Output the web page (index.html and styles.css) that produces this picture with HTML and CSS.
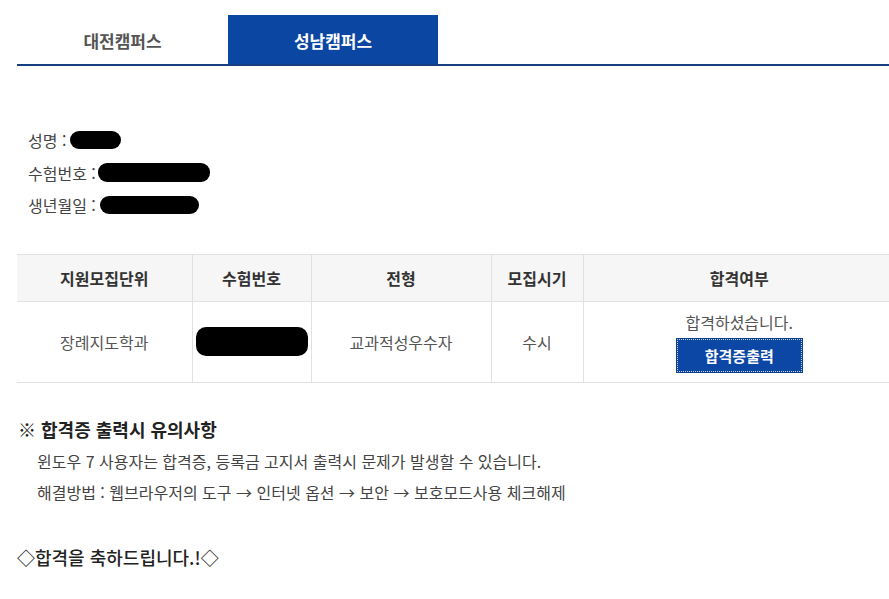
FILE: index.html
```html
<!DOCTYPE html>
<html lang="ko">
<head>
<meta charset="utf-8">
<title>합격자 조회</title>
<link rel="stylesheet" href="styles.css">
</head>
<body>
<div class="page">
  <div class="tabs">
    <a class="tab">대전캠퍼스</a>
    <a class="tab active">성남캠퍼스</a>
  </div>

  <div class="info">
    <div class="info-row">성명 : <span class="redact r-name"></span></div>
    <div class="info-row">수험번호 : <span class="redact r-num"></span></div>
    <div class="info-row">생년월일 : <span class="redact r-birth"></span></div>
  </div>

  <table class="result">
    <colgroup>
      <col class="c1"><col class="c2"><col class="c3"><col class="c4"><col class="c5">
    </colgroup>
    <thead>
      <tr>
        <th>지원모집단위</th>
        <th>수험번호</th>
        <th>전형</th>
        <th>모집시기</th>
        <th>합격여부</th>
      </tr>
    </thead>
    <tbody>
      <tr>
        <td>장례지도학과</td>
        <td><span class="redact r-cell"></span></td>
        <td>교과적성우수자</td>
        <td>수시</td>
        <td>
          <div class="pass">합격하셨습니다.</div>
          <button class="print-btn">합격증출력</button>
        </td>
      </tr>
    </tbody>
  </table>

  <div class="notice">
    <h3 class="notice-title">※ 합격증 출력시 유의사항</h3>
    <p class="notice-line">윈도우 7 사용자는 합격증, 등록금 고지서 출력시 문제가 발생할 수 있습니다.</p>
    <p class="notice-line">해결방법 : 웹브라우저의 도구 → 인터넷 옵션 → 보안 → 보호모드사용 체크해제</p>
  </div>

  <p class="congrats">◇합격을 축하드립니다.!◇</p>
</div>
</body>
</html>
```

FILE: styles.css
```css
html, body {
  margin: 0;
  padding: 0;
  background: #ffffff;
}
body {
  font-family: "Noto Sans CJK KR", "Noto Sans", "Liberation Sans", sans-serif;
  color: #444;
  overflow: hidden;
}
.page {
  margin-left: 17px;
  padding-top: 15px;
}
.tabs {
  display: flex;
  border-bottom: 2px solid #163f7f;
  height: 49px;
}
.tab {
  width: 211px;
  display: flex;
  align-items: center;
  justify-content: center;
  font-size: 17px;
  font-weight: bold;
  color: #555;
  padding-top: 1px;
}
.tab.active {
  width: 210px;
  background: #0b46a3;
  color: #ffffff;
}
.info {
  padding-top: 58px;
  padding-left: 11px;
}
.info-row {
  height: 32.5px;
  line-height: 32px;
  font-size: 16px;
  color: #444;
  display: flex;
  align-items: center;
}
.redact {
  display: inline-block;
  flex: none;
  background: #000;
  border-radius: 9px;
}
.r-name { width: 51px; height: 18px; margin-left: 4px; }
.r-num { width: 112px; height: 19px; margin-left: 2px; }
.r-birth { width: 99px; height: 18px; margin-left: 4px; }
.r-cell { width: 112px; height: 29px; border-radius: 10px; vertical-align: middle; }

.result {
  margin-top: 32px;
  width: calc(100% + 6px);
  border-collapse: collapse;
  table-layout: fixed;
  font-size: 16px;
}
.c1 { width: 175px; }
.c2 { width: 119px; }
.c3 { width: 180px; }
.c4 { width: 92px; }
.result th, .result td {
  border-top: 1px solid #e1e1e1;
  border-bottom: 1px solid #e1e1e1;
  border-left: 1px solid #e1e1e1;
  text-align: center;
  padding: 0;
}
.result th:first-child, .result td:first-child { border-left: none; }
.result th {
  background: #f6f6f6;
  height: 46px;
  font-weight: bold;
  color: #333;
}
.result td {
  height: 80px;
  color: #555;
}
.pass {
  line-height: 20px;
  margin-top: 0;
}
.print-btn {
  margin-top: 7px;
  width: 125px;
  height: 33px;
  background: #0c47a6;
  color: #fff;
  font-family: inherit;
  font-size: 15px;
  font-weight: bold;
  border: 1px dotted #c9d3e6;
  outline: 1px solid #0c3f8f;
  padding: 0;
}
.notice {
  padding-top: 32px;
}
.notice-title {
  margin: 0;
  font-size: 18px;
  font-weight: bold;
  color: #222;
  line-height: 28px;
  padding-left: 1px;
}
.notice-line {
  margin: 0;
  padding-left: 20px;
  font-size: 16px;
  line-height: 31px;
  color: #444;
}
.notice-line:first-of-type { margin-top: 3px; }
.congrats {
  margin: 0;
  padding-top: 35px;
  font-size: 18px;
  line-height: 28px;
  color: #222;
  font-weight: 500;
}
```
